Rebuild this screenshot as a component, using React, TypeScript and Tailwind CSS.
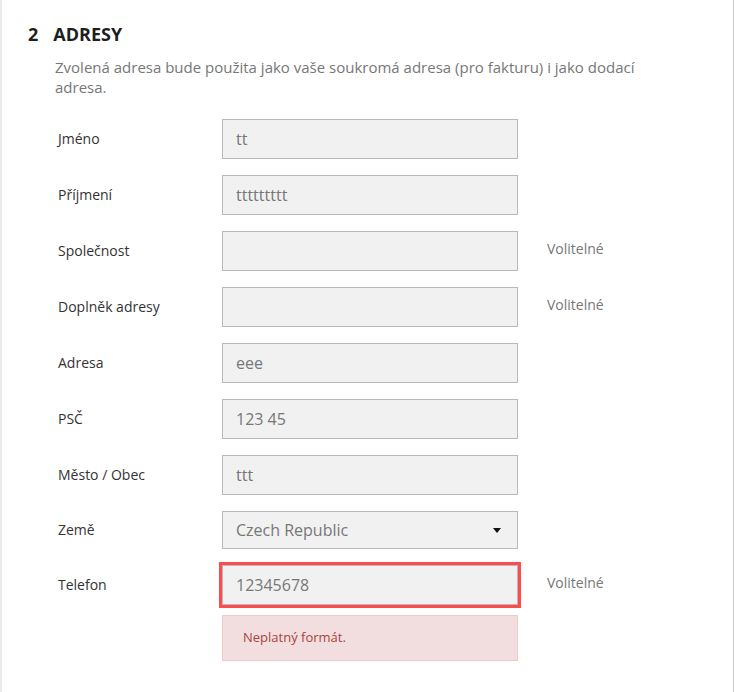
import React from 'react'

type FieldProps = {
	label: string
	value?: string
	optional?: boolean
	kind?: 'input' | 'select'
	invalid?: boolean
}

const Field = ({ label, value = '', optional, kind = 'input', invalid }: FieldProps) => (
	<div className="flex items-center">
		<label className="w-[164px] text-[14px] leading-5 text-[#333]">{label}</label>
		{kind === 'select' ? (
			<div className="flex h-[38px] w-[296px] items-center justify-between border border-[#b9b9b9] bg-[#f1f1f1] pl-[13px] pr-[16px] text-[16px] text-[#777]">
				<span>{value}</span>
				<span className="h-0 w-0 border-x-[4px] border-t-[5px] border-x-transparent border-t-[#111]" />
			</div>
		) : (
			<div
				className={`flex h-10 w-[296px] items-center border border-[#b9b9b9] bg-[#f1f1f1] pl-[13px] text-[16px] text-[#777] ${
					invalid ? 'ring-[3px] ring-[#ff4b4b]' : ''
				}`}
			>
				{value}
			</div>
		)}
		{optional && <span className="mb-[5px] ml-[29px] text-[14px] leading-5 text-[#777]">Volitelné</span>}
	</div>
)

export default function App() {
	return (
		<div className="flex h-[692px] w-[734px] font-['Open_Sans',sans-serif]">
			<div className="w-[2px] bg-[#ebebeb]" />
			<div className="flex-1 border-r border-[#c6c6c6] bg-white pl-[26px] pt-[22px]">
				<h2 className="text-[18px] font-bold leading-6 text-[#1e1e1e]">
					<span className="mr-[15px]">2</span>ADRESY
				</h2>
				<p className="ml-[27px] mt-[11px] w-[600px] text-[15px] leading-5 text-[#777]">
					Zvolená adresa bude použita jako vaše soukromá adresa (pro fakturu) i jako dodací adresa.
				</p>
				<div className="ml-[30px] mt-[22px] flex flex-col gap-4">
					<Field label="Jméno" value="tt" />
					<Field label="Příjmení" value="ttttttttt" />
					<Field label="Společnost" optional />
					<Field label="Doplněk adresy" optional />
					<Field label="Adresa" value="eee" />
					<Field label="PSČ" value="123 45" />
					<Field label="Město / Obec" value="ttt" />
					<Field label="Země" value="Czech Republic" kind="select" />
					<div className="flex flex-col gap-[10px]">
						<Field label="Telefon" value="12345678" optional invalid />
						<div className="ml-[164px] flex h-[46px] w-[296px] items-center border border-[#ebcccc] bg-[#f2dede] pl-[20px] text-[13px] text-[#a94442]">
							Neplatný formát.
						</div>
					</div>
				</div>
			</div>
		</div>
	)
}
